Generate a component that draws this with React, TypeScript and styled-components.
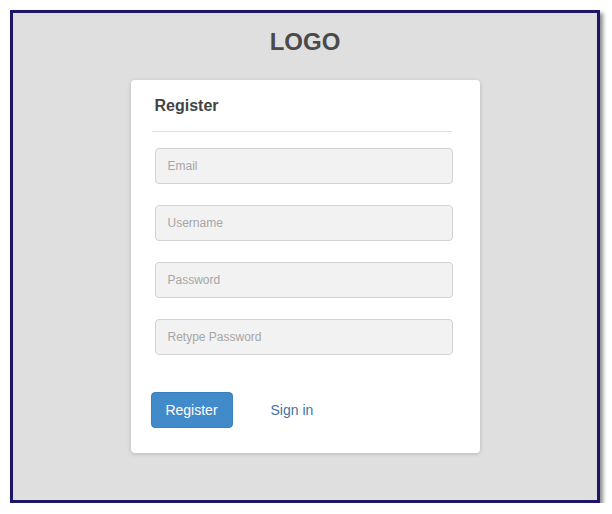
import React from "react";
import styled, { createGlobalStyle } from "styled-components";

const GlobalStyle = createGlobalStyle`
  html, body {
    margin: 0;
    padding: 0;
    background: #ffffff;
    font-family: "Liberation Sans", Arial, sans-serif;
  }
  * { box-sizing: border-box; }
`;

const Frame = styled.div`
  margin: 10px 0 0 10px;
  width: 590px;
  height: 493px;
  border: 3px solid #1b1668;
  background: #dfdfdf;
  box-shadow: 3px 3px 4px rgba(0, 0, 0, 0.45);
  display: flex;
  flex-direction: column;
  align-items: center;
  padding-top: 15px;
`;

const Logo = styled.h1`
  margin: 0;
  font-size: 24px;
  line-height: 28px;
  font-weight: bold;
  color: #4a4a4a;
`;

const Card = styled.div`
  margin-top: 24px;
  width: 349px;
  background: #ffffff;
  border-radius: 4px;
  box-shadow: 0 1px 4px rgba(0, 0, 0, 0.18);
  padding: 16px 27px 25px 20px;
  display: flex;
  flex-direction: column;
`;

const Body = styled.div`
  margin-left: 4px;
  display: flex;
  flex-direction: column;
`;

const Heading = styled.h2`
  margin: 0;
  font-size: 16px;
  line-height: 20px;
  font-weight: bold;
  color: #444444;
`;

const Divider = styled.hr`
  margin: 15px 0 16px -3px;
  width: 300px;
  border: 0;
  height: 1px;
  background: #dedede;
`;

const Fields = styled.div`
  display: flex;
  flex-direction: column;
  gap: 21px;
`;

const Field = styled.input`
  width: 298px;
  height: 36px;
  border: 1px solid #d3d3d3;
  border-radius: 4px;
  background: #f2f2f2;
  padding: 0 12px;
  font-family: "Liberation Sans", Arial, sans-serif;
  font-size: 12px;
  color: #555;
  outline: none;
  &::placeholder {
    color: #a6a6a6;
  }
`;

const Actions = styled.div`
  margin-top: 37px;
  display: flex;
  align-items: center;
`;

const PrimaryButton = styled.button`
  width: 82px;
  height: 36px;
  border: 1px solid #3a7fbe;
  border-radius: 4px;
  background: #428bca;
  color: #ffffff;
  font-family: "Liberation Sans", Arial, sans-serif;
  font-size: 14px;
  padding: 0;
  cursor: pointer;
`;

const TextLink = styled.a`
  margin-left: 38px;
  font-size: 14px;
  color: #3f73a6;
  text-decoration: none;
  cursor: pointer;
`;

const fields = ["Email", "Username", "Password", "Retype Password"];

export default function App() {
  return (
    <>
      <GlobalStyle />
      <Frame>
        <Logo>LOGO</Logo>
        <Card>
          <Body>
            <Heading>Register</Heading>
            <Divider />
            <Fields>
              {fields.map((f) => (
                <Field
                  key={f}
                  type={f.includes("Password") ? "password" : "text"}
                  placeholder={f}
                />
              ))}
            </Fields>
          </Body>
          <Actions>
            <PrimaryButton>Register</PrimaryButton>
            <TextLink>Sign in</TextLink>
          </Actions>
        </Card>
      </Frame>
    </>
  );
}
